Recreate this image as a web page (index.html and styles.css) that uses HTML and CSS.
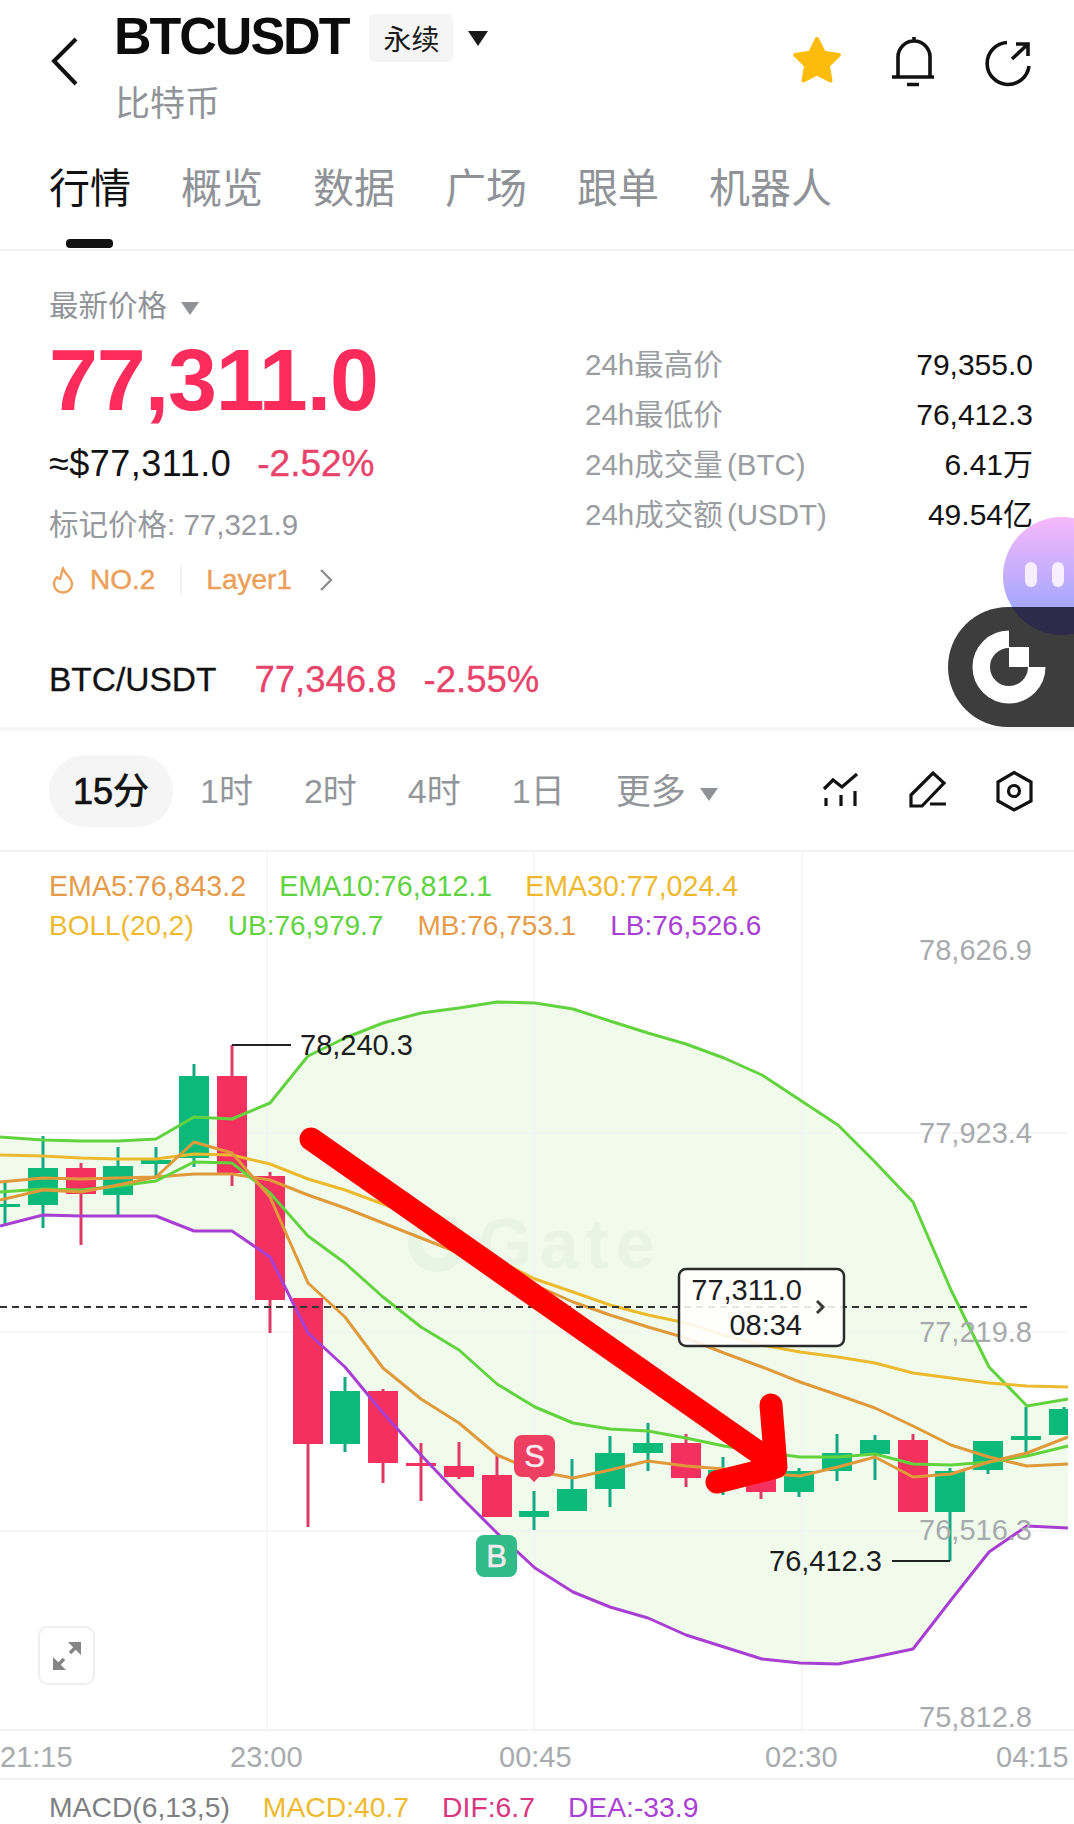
FILE: index.html
```html
<!DOCTYPE html>
<html lang="zh-CN">
<head>
<meta charset="utf-8">
<title>BTCUSDT</title>
<link rel="stylesheet" href="styles.css">
</head>
<body>
<div class="page">
  <header class="header">
    <svg class="back" viewBox="0 0 30 50" width="30" height="50"><path d="M26 3 4 25l22 23"/></svg>
    <div class="title-block">
      <div class="title-row">
        <span class="symbol">BTCUSDT</span>
        <span class="badge">永续</span>
        <span class="caret caret-dark"></span>
      </div>
      <div class="subtitle">比特币</div>
    </div>
    <div class="header-actions">
      <svg class="star" viewBox="0 0 58 60" width="58" height="60"><path d="M30 9 36.800 22.700 51.900 24.900 40.900 35.600 43.500 50.600 30 43.500 16.500 50.600 19.100 35.600 8.100 24.900 23.200 22.700Z"/></svg>
      <svg class="line-icon icon-heavy" viewBox="0 0 54 54" width="54" height="54"><path d="M13 47V27a16 16 0 0 1 32 0v20M7 47h42M29 7v4M22 54.500h12"/></svg>
      <svg class="line-icon icon-heavy" viewBox="0 0 54 54" width="54" height="54"><path d="M28 12.500A21 21 0 1 0 50 36M33 29 49 14M37 14h12v12"/></svg>
    </div>
  </header>

  <nav class="tabs">
    <div class="tab tab-active">行情</div>
    <div class="tab">概览</div>
    <div class="tab">数据</div>
    <div class="tab">广场</div>
    <div class="tab">跟单</div>
    <div class="tab">机器人</div>
  </nav>

  <section class="summary">
    <div class="summary-columns">
      <div class="quote">
        <div class="quote-label">最新价格<span class="caret caret-grey"></span></div>
        <div class="quote-price">77,311.0</div>
        <div class="quote-sub"><span class="fiat">≈$77,311.0</span><span class="down">-2.52%</span></div>
        <div class="quote-mark">标记价格: 77,321.9</div>
        <div class="quote-tags">
          <svg class="flame" viewBox="0 0 24 28" width="24" height="28"><path d="M12 2c1 6 9 9 9 16a9 8.500 0 0 1-18 0c0-3 1-5 3-7 1 1 2 2 3 2 1-3 2-7 3-11Z"/></svg>
          <span class="rank">NO.2</span>
          <span class="tag-divider"></span>
          <span class="rank">Layer1</span>
          <svg class="tag-more" viewBox="0 0 14 22" width="14" height="22"><path d="M2 1l10 10L2 21"/></svg>
        </div>
      </div>
      <dl class="stats">
        <div class="stat"><dt>24h最高价</dt><dd>79,355.0</dd></div>
        <div class="stat"><dt>24h最低价</dt><dd>76,412.3</dd></div>
        <div class="stat"><dt>24h成交量 (BTC)</dt><dd>6.41万</dd></div>
        <div class="stat"><dt>24h成交额 (USDT)</dt><dd>49.54亿</dd></div>
      </dl>
    </div>
    <div class="spot"><span class="spot-name">BTC/USDT</span><span class="spot-value">77,346.8</span><span class="spot-value">-2.55%</span></div>
  </section>

  <div class="timeframes">
    <span class="tf tf-active">15分</span>
    <span class="tf">1时</span>
    <span class="tf">2时</span>
    <span class="tf">4时</span>
    <span class="tf">1日</span>
    <span class="tf tf-more">更多<span class="caret caret-grey"></span></span>
    <div class="tf-tools">
      <svg class="line-icon" viewBox="0 0 40 40" width="40" height="40"><path d="M3 18l9-9 9 7L36 3M5 27v8M20 24v11M34 20v15"/></svg>
      <svg class="line-icon" viewBox="0 0 40 40" width="40" height="40"><path d="M3 24 25 2l11 10-22 23H3ZM22 33h16"/></svg>
      <svg class="line-icon" viewBox="0 0 40 40" width="40" height="40"><path d="M19 1.500 36 11v19l-17 9-16-9V11Z"/><circle cx="19" cy="20" r="5.500"/></svg>
    </div>
  </div>

  <section class="chart">
    <svg class="chart-canvas" viewBox="0 852 1074 877" width="1074" height="877">
      <!-- Bollinger band area -->
      <polygon class="band" points="0,1137 43,1140 81,1141 118,1141 156,1139 194,1117 232,1119 270,1103 308,1056 345,1038 383,1023 421,1013 459,1008 497,1002 535,1003 573,1009 610,1021 648,1033 686,1044 724,1058 762,1075 800,1100 838,1125 875,1162 913,1202 951,1290 989,1367 1027,1406 1068,1399 1068,1528 1027,1526 989,1552 951,1600 913,1649 875,1657 838,1664 800,1663 762,1659 724,1647 686,1635 648,1618 610,1607 573,1592 535,1568 497,1533 459,1495 421,1455 383,1413 345,1367 308,1333 270,1257 232,1231 194,1231 156,1216 118,1216 81,1216 43,1215 0,1226"/>
      <!-- Grid -->
      <path class="grid" d="M267 852V1729M534 852V1729M802 852V1729M0 1133H1068M0 1332H1068M0 1531H1068"/>
      <!-- Exchange watermark -->
      <circle class="mark-ring" cx="437" cy="1243" r="22"/>
      <text class="mark-text" x="478" y="1268">Gate</text>
      <!-- Candles -->
      <path class="wick-up" d="M5 1182V1225M43 1136V1228M118 1147V1216M156 1147V1177M194 1064V1167M345 1377V1452M534 1491V1530M572 1459V1489M610 1436V1507M648 1423V1471M723 1457V1495M799 1468V1497M837 1434V1481M875 1435V1480M950 1468V1561M988 1441V1474M1026 1407V1452M1064 1407V1409"/>
      <path class="body-up" d="M-10 1204h30v3h-30zM28 1168h30v37h-30zM103 1166h30v29h-30zM141 1160h30v4h-30zM179 1076h30v82h-30zM330 1391h30v53h-30zM519 1511h30v6h-30zM557 1489h30v22h-30zM595 1453h30v36h-30zM633 1443h30v10h-30zM708 1470h30v5h-30zM784 1471h30v21h-30zM822 1453h30v18h-30zM860 1440h30v14h-30zM935 1471h30v41h-30zM973 1441h30v29h-30zM1011 1436h30v4h-30zM1049 1409h19v26h-19z"/>
      <path class="wick-down" d="M81 1163V1245M232 1045V1186M270 1172V1333M308 1444V1527M383 1389V1483M421 1443V1501M459 1442V1479M497 1455V1475M686 1434V1487M761 1492V1499M913 1434V1440"/>
      <path class="body-down" d="M66 1168h30v26h-30zM217 1076h30v97h-30zM255 1176h30v124h-30zM293 1298h30v146h-30zM368 1391h30v72h-30zM406 1463h30v3h-30zM444 1466h30v11h-30zM482 1475h30v42h-30zM671 1443h30v35h-30zM746 1470h30v22h-30zM898 1440h30v72h-30z"/>
      <!-- Averages and bands -->
      <polyline class="line line-band" points="0,1137 43,1140 81,1141 118,1141 156,1139 194,1117 232,1119 270,1103 308,1056 345,1038 383,1023 421,1013 459,1008 497,1002 535,1003 573,1009 610,1021 648,1033 686,1044 724,1058 762,1075 800,1100 838,1125 875,1162 913,1202 951,1290 989,1367 1027,1406 1068,1399"/>
      <polyline class="line line-lower" points="0,1226 43,1215 81,1216 118,1216 156,1216 194,1231 232,1231 270,1257 308,1333 345,1367 383,1413 421,1455 459,1495 497,1533 535,1568 573,1592 610,1607 648,1618 686,1635 724,1647 762,1659 800,1663 838,1664 875,1657 913,1649 951,1600 989,1552 1027,1526 1068,1528"/>
      <polyline class="line line-slow" points="0,1155 43,1156 81,1158 118,1159 156,1159 194,1154 232,1155 270,1164 308,1179 345,1190 383,1204 421,1218 459,1238 497,1260 535,1279 573,1292 610,1305 648,1315 686,1323 724,1335 762,1345 800,1352 838,1357 875,1363 913,1373 951,1378 989,1383 1027,1386 1068,1387"/>
      <polyline class="line line-mid" points="0,1182 43,1178 81,1179 118,1178 156,1177 194,1174 232,1174 270,1180 308,1195 345,1208 383,1223 421,1238 459,1253 497,1268 535,1285 573,1302 610,1315 648,1327 686,1338 724,1353 762,1367 800,1382 838,1395 875,1408 913,1426 951,1445 989,1457 1027,1466 1068,1464"/>
      <polyline class="line line-band" points="0,1192 43,1189 81,1190 118,1186 156,1181 194,1162 232,1163 270,1193 308,1236 345,1263 383,1297 421,1327 459,1350 497,1384 535,1407 573,1423 610,1429 648,1431 686,1438 724,1446 762,1452 800,1457 838,1457 875,1454 913,1464 951,1465 989,1462 1027,1456 1068,1446"/>
      <polyline class="line line-mid" points="0,1200 43,1190 81,1192 118,1185 156,1177 194,1142 232,1153 270,1197 308,1283 345,1317 383,1368 421,1399 459,1423 497,1455 535,1471 573,1478 610,1470 648,1461 686,1466 724,1469 762,1473 800,1476 838,1467 875,1457 913,1477 951,1474 989,1462 1027,1453 1068,1437"/>
      <!-- Last price -->
      <line class="last-line" x1="0" y1="1307" x2="1027" y2="1307"/>
      <!-- Price axis -->
      <text class="axis-label" x="1032" y="960">78,626.9</text>
      <text class="axis-label" x="1032" y="1143">77,923.4</text>
      <text class="axis-label" x="1032" y="1342">77,219.8</text>
      <text class="axis-label" x="1032" y="1540">76,516.3</text>
      <text class="axis-label" x="1032" y="1727">75,812.8</text>
      <!-- Session high and low -->
      <path class="leader" d="M232 1045H291M950 1561H892"/>
      <text class="extreme" x="300" y="1055">78,240.3</text>
      <text class="extreme" x="769" y="1571">76,412.3</text>
      <!-- Buy and sell markers -->
      <path class="marker-sell" d="M522 1435h25a8 8 0 0 1 8 8v26a8 8 0 0 1-8 8h-8l-5 5-5-5h-7a8 8 0 0 1-8-8v-26a8 8 0 0 1 8-8Z"/>
      <text class="marker-text" x="534.500" y="1467">S</text>
      <rect class="marker-buy" x="476" y="1535" width="41" height="42" rx="8"/>
      <text class="marker-text" x="496.500" y="1567">B</text>
      <!-- Last price flag -->
      <rect class="flag" x="679" y="1269" width="165" height="77" rx="7"/>
      <text class="flag-text" x="802" y="1300">77,311.0</text>
      <text class="flag-text" x="802" y="1335">08:34</text>
      <path class="flag-more" d="M817 1301l6 6-6 6"/>
      <!-- Hand-drawn annotation arrow -->
      <path class="annotation" d="M311 1139 775 1464M771 1405l5 62-59 15"/>
    </svg>
    <div class="legend">
      <div class="legend-row legend-row-wide"><span class="c-orange">EMA5:76,843.2</span><span class="c-green">EMA10:76,812.1</span><span class="c-yellow">EMA30:77,024.4</span></div>
      <div class="legend-row"><span class="c-yellow">BOLL(20,2)</span><span class="c-green">UB:76,979.7</span><span class="c-orange">MB:76,753.1</span><span class="c-purple">LB:76,526.6</span></div>
    </div>
    <button class="expand" type="button" aria-label="expand">
      <svg viewBox="0 0 28 28" width="28" height="28"><path class="expand-line" d="M3 25 11 17M17 11 25 3"/><path class="expand-head" d="M28 0v13L15 0ZM0 28V15l13 13Z"/></svg>
    </button>
  </section>

  <div class="time-axis"><span>21:15</span><span>23:00</span><span>00:45</span><span>02:30</span><span>04:15</span></div>

  <div class="macd">
    <span class="c-grey">MACD(6,13,5)</span><span class="c-yellow">MACD:40.7</span><span class="c-pink">DIF:6.7</span><span class="c-purple">DEA:-33.9</span>
    <span class="macd-scale">88.6</span>
  </div>

  <!-- Floating assistant and exchange shortcuts -->
  <svg class="floaters" viewBox="0 0 126 210" width="126" height="210">
    <defs>
      <linearGradient id="bubble" x1="0" y1="0" x2="0" y2="1">
        <stop offset="0" stop-color="#f7b8fb"/>
        <stop offset="0.75" stop-color="#a8a8fc"/>
      </linearGradient>
      <clipPath id="pill-clip"><rect x="0" y="90" width="200" height="120" rx="60"/></clipPath>
    </defs>
    <circle cx="114" cy="59" r="59" fill="url(#bubble)"/>
    <rect x="77" y="45" width="12" height="25" rx="6" class="eye"/>
    <rect x="104" y="45" width="12" height="25" rx="6" class="eye"/>
    <rect x="0" y="90" width="200" height="120" rx="60" class="pill"/>
    <circle cx="114" cy="59" r="59" class="pill-overlap" clip-path="url(#pill-clip)"/>
    <path class="gate-ring" d="M61 122.250A27.750 27.750 0 1 0 88.750 150"/>
    <rect x="61" y="130" width="20" height="20" class="gate-square"/>
  </svg>
</div>
</body>
</html>
```

FILE: styles.css
```css
* { box-sizing: border-box; margin: 0; padding: 0; }

html, body { background: #fff; }

body {
  font-family: "Liberation Sans", "Noto Sans CJK SC", sans-serif;
  color: #111;
}

.page {
  position: relative;
  width: 1074px;
  height: 1824px;
  overflow: hidden;
  background: #fff;
}

/* Header */
.header {
  display: flex;
  align-items: flex-start;
  height: 140px;
  padding: 14px 41px 0 50px;
}

.back {
  margin: 22px 34px 0 0;
  fill: none;
  stroke: #111;
  stroke-width: 4;
}

.title-row {
  display: flex;
  align-items: center;
  height: 48px;
}

.symbol {
  font-size: 52px;
  line-height: 48px;
  font-weight: 700;
  letter-spacing: -2px;
  margin-top: -5px;
  color: #0c0c0c;
}

.badge {
  display: flex;
  align-items: center;
  justify-content: center;
  width: 84px;
  height: 48px;
  margin-left: 21px;
  border-radius: 6px;
  background: #f5f5f5;
  font-size: 28px;
  color: #1a1a1a;
}

.caret {
  display: inline-block;
  width: 0;
  height: 0;
  border-left: 10px solid transparent;
  border-right: 10px solid transparent;
  border-top: 15px solid #8f9397;
}

.caret-dark {
  margin: 0 0 0 15px;
  border-top-color: #1a1a1a;
}

.caret-grey {
  margin-left: 14px;
  border-left-width: 9px;
  border-right-width: 9px;
  border-top-width: 13px;
  vertical-align: middle;
}

.subtitle {
  margin: 22px 0 0 1px;
  font-size: 35px;
  line-height: 40px;
  color: #909498;
}

.header-actions {
  display: flex;
  gap: 40px;
  margin-left: auto;
  margin-top: 16px;
}

.star {
  fill: #fdbc0c;
  stroke: #fdbc0c;
  stroke-width: 4;
  stroke-linejoin: round;
}

.line-icon {
  fill: none;
  stroke: #111;
  stroke-width: 3.200;
  overflow: visible;
}

.icon-heavy { stroke-width: 3.600; }

/* Tabs */
.tabs {
  display: flex;
  gap: 50px;
  height: 111px;
  padding: 25px 0 0 49px;
  border-bottom: 2px solid #f2f2f2;
}

.tab {
  font-size: 41px;
  line-height: 48px;
  color: #8f9397;
}

.tab::after {
  content: "";
  display: block;
  width: 47px;
  height: 9px;
  margin: 26px 0 0 17px;
  border-radius: 4px;
}

.tab-active { color: #111; }
.tab-active::after { background: #111; }

/* Price summary */
.summary {
  height: 480px;
  padding: 35px 41px 0 49px;
  border-bottom: 4px solid #f6f6f6;
}

.summary-columns {
  display: flex;
  justify-content: space-between;
  height: 314px;
}

.quote-label {
  font-size: 29.500px;
  line-height: 40px;
  color: #8f9397;
}

.quote-price {
  margin-top: 4px;
  font-size: 88px;
  line-height: 100px;
  font-weight: 700;
  letter-spacing: -1.100px;
  color: #fb2c5b;
}

.quote-sub {
  display: flex;
  gap: 26px;
  margin-top: 12px;
  font-size: 36px;
  line-height: 44px;
}

.fiat { letter-spacing: 0.500px; }

.down {
  font-size: 37px;
  color: #e8436b;
  -webkit-text-stroke: 0.400px #e8436b;
}

.quote-mark {
  margin-top: 19px;
  font-size: 29.500px;
  line-height: 40px;
  color: #96999d;
}

.quote-tags {
  display: flex;
  align-items: center;
  height: 40px;
  margin-top: 15px;
  padding-left: 2px;
}

.flame {
  fill: none;
  stroke: #eda35c;
  stroke-width: 2.400;
  stroke-linejoin: round;
}

.rank {
  margin-left: 15px;
  font-size: 28px;
  color: #eba058;
  -webkit-text-stroke: 0.400px #eba058;
}

.tag-divider {
  width: 2px;
  height: 30px;
  margin: 0 9px 0 25px;
  background: #f2f2f2;
}

.tag-more {
  margin-left: 27px;
  fill: none;
  stroke: #8d8d8d;
  stroke-width: 2.400;
}

.stats {
  width: 448px;
  margin-top: 54px;
}

.stat {
  display: flex;
  justify-content: space-between;
  height: 50px;
  line-height: 50px;
  font-size: 30px;
}

.stat dt {
  font-size: 29.500px;
  word-spacing: -4px;
  color: #9a9da1;
}

.stat dd { color: #111; }

.spot {
  display: flex;
  align-items: center;
  height: 40px;
  font-size: 36.500px;
  margin-top: 60px;
  color: #e8436b;
  -webkit-text-stroke: 0.300px #e8436b;
}

.spot-name {
  margin-right: 38px;
  font-size: 33.500px;
  color: #111;
  -webkit-text-stroke: 0.300px #111;
}

.spot-value { margin-right: 27px; }

/* Timeframe selector */
.timeframes {
  display: flex;
  align-items: center;
  gap: 51px;
  height: 121px;
  padding: 0 39px 0 49px;
  border-bottom: 2px solid #f2f2f2;
  font-size: 34px;
  color: #92969a;
}

.tf { padding-bottom: 5px; }

.tf-active {
  display: flex;
  align-items: center;
  justify-content: center;
  width: 124px;
  height: 72px;
  margin-right: -24px;
  border-radius: 36px;
  background: #f5f5f5;
  font-size: 36px;
  color: #111;
  -webkit-text-stroke: 0.700px #111;
}

.tf-more { font-size: 35px; }
.tf-more .caret { vertical-align: 3px; }

.tf-tools {
  display: flex;
  gap: 47px;
  margin-left: auto;
}

/* Chart */
.chart {
  position: relative;
  height: 877px;
}

.chart-canvas {
  display: block;
  overflow: visible;
}

.band { fill: #f0fbec; }

.grid {
  fill: none;
  stroke: #f4f4f4;
  stroke-width: 1.500;
}

.mark-ring {
  fill: none;
  stroke: #e8f5e3;
  stroke-width: 14;
}

.mark-text {
  font-size: 70px;
  font-weight: 700;
  letter-spacing: 7px;
  fill: #e8f5e3;
}

.wick-up { stroke: #12a884; stroke-width: 3; fill: none; }
.body-up { fill: #0bb97b; }
.wick-down { stroke: #de3a66; stroke-width: 3; fill: none; }
.body-down { fill: #f4305e; }

.line {
  fill: none;
  stroke-width: 3;
  stroke-linejoin: round;
}

.line-band { stroke: #62d33e; }
.line-lower { stroke: #a83fd2; }
.line-slow { stroke: #ecb92f; }
.line-mid { stroke: #e09a3c; }

.last-line {
  stroke: #333;
  stroke-width: 2;
  stroke-dasharray: 7 5;
}

.axis-label {
  font-size: 29px;
  fill: #a8abae;
  text-anchor: end;
}

.leader {
  fill: none;
  stroke: #222;
  stroke-width: 2;
}

.extreme {
  font-size: 29px;
  fill: #1c1c1c;
}

.marker-sell { fill: #ec3f62; }
.marker-buy { fill: #30bb88; }

.marker-text {
  font-size: 31px;
  fill: #fde9ee;
  text-anchor: middle;
  stroke: #fde9ee;
  stroke-width: 0.500;
}

.flag {
  fill: rgba(255, 255, 255, 0.88);
  stroke: #2b2b2b;
  stroke-width: 2.500;
}

.flag-text {
  font-size: 29px;
  fill: #1c1c1c;
  text-anchor: end;
}

.flag-more {
  fill: none;
  stroke: #3a3a3a;
  stroke-width: 3;
}

.annotation {
  fill: none;
  stroke: #ff0000;
  stroke-width: 23;
  stroke-linecap: round;
  stroke-linejoin: round;
}

.legend {
  position: absolute;
  left: 49px;
  top: 14px;
  font-size: 28px;
}

.legend-row {
  display: flex;
  gap: 34px;
  height: 40px;
  line-height: 40px;
}

.legend-row-wide {
  gap: 33px;
  font-size: 28.600px;
}

.c-orange { color: #e59b48; }
.c-green { color: #60d33f; }
.c-yellow { color: #efb92e; }
.c-purple { color: #a93fd4; }
.c-pink { color: #da3680; }
.c-grey { color: #7d7f82; }

.expand {
  position: absolute;
  left: 38px;
  top: 774px;
  display: flex;
  align-items: center;
  justify-content: center;
  width: 57px;
  height: 59px;
  border: 2px solid #eeeeee;
  border-radius: 10px;
  background: #fff;
}

.expand-line { fill: none; stroke: #858585; stroke-width: 3.500; }
.expand-head { fill: #858585; }

/* Time axis */
.time-axis {
  display: grid;
  grid-template-columns: 230px 269px 266px 231px auto;
  height: 51px;
  line-height: 53px;
  font-size: 29px;
  color: #a8abae;
  border-top: 2px solid #f2f2f2;
  border-bottom: 2px solid #f2f2f2;
}

/* MACD header */
.macd {
  display: flex;
  gap: 33px;
  height: 44px;
  line-height: 55px;
  padding: 0 42px 0 49px;
  font-size: 28.300px;
}

.macd-scale {
  margin-left: auto;
  margin-top: 26px;
  color: #a8abae;
}

/* Floating shortcuts */
.floaters {
  position: absolute;
  right: 0;
  top: 517px;
}

.eye { fill: #f7eeff; }
.pill { fill: #3d3d3d; }
.pill-overlap { fill: #2d2b49; }

.gate-ring {
  fill: none;
  stroke: #fff;
  stroke-width: 17.500;
}

.gate-square { fill: #fff; }
```
